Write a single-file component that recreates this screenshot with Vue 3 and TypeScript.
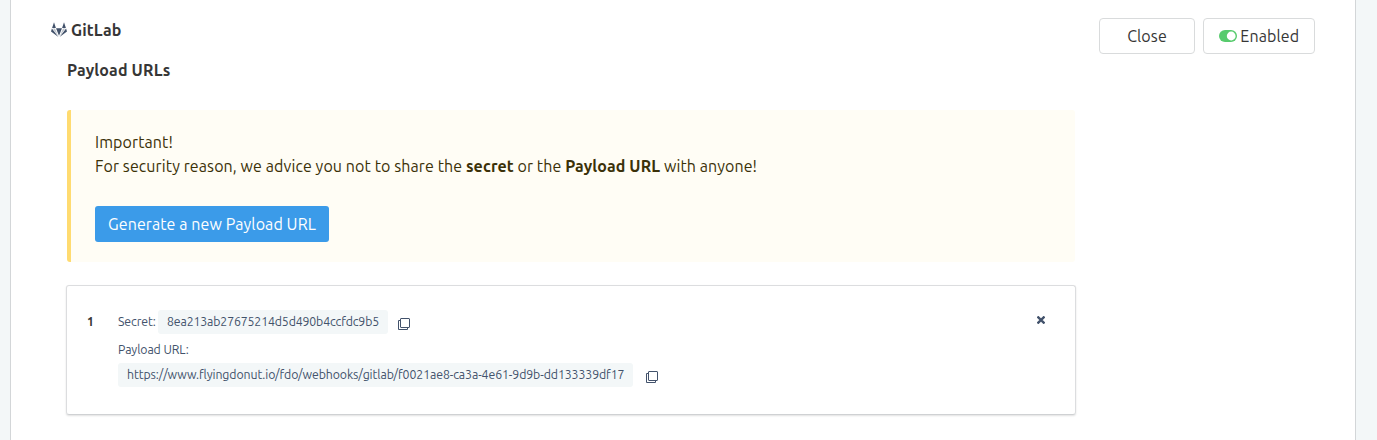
<script setup lang="ts">
import { ref } from 'vue'

interface Hook {
  secret: string
  url: string
}

const enabled = ref(true)
const hooks = ref<Hook[]>([
  {
    secret: '8ea213ab27675214d5d490b4ccfdc9b5',
    url: 'https://www.flyingdonut.io/fdo/webhooks/gitlab/f0021ae8-ca3a-4e61-9d9b-dd133339df17',
  },
])
</script>

<template>
  <div class="page">
    <main class="panel">
      <section class="content">
        <h2 class="title">
          <svg class="logo" width="16" height="16" viewBox="0 0 16 16">
            <path d="M3 .2 4.9 6H1.1zM13 .2 14.9 6H11.1zM5 6.2h6L8 13.8zM.9 6.5 0 9.6l7.4 5.3zM15.1 6.5 16 9.6l-7.4 5.3z" />
            <path class="cheek" d="M1.7 6.4h2.3l3 7.4zM14.3 6.4H12l-3 7.4z" />
          </svg>
          <span>GitLab</span>
        </h2>
        <h3 class="subtitle">Payload URLs</h3>

        <div class="notice">
          <p class="line">Important!</p>
          <p class="line">For security reason, we advice you not to share the <strong>secret</strong> or the <strong>Payload URL</strong> with anyone!</p>
          <button class="generate" type="button">Generate a new Payload URL</button>
        </div>

        <article v-for="(hook, i) in hooks" :key="hook.secret" class="card">
          <span class="index">{{ i + 1 }}</span>
          <div class="fields">
            <div class="row">
              <span class="label secret-label">Secret:</span>
              <code class="chip secret">{{ hook.secret }}</code>
              <svg class="copy" width="12" height="12" viewBox="0 0 12 12">
                <path d="M2.5 2.5H.5v9h9v-2" />
                <rect x="2.5" y=".5" width="9" height="9" rx=".5" />
              </svg>
            </div>
            <div class="label url-label">Payload URL:</div>
            <div class="row">
              <code class="chip url">{{ hook.url }}</code>
              <svg class="copy" width="12" height="12" viewBox="0 0 12 12">
                <path d="M2.5 2.5H.5v9h9v-2" />
                <rect x="2.5" y=".5" width="9" height="9" rx=".5" />
              </svg>
            </div>
          </div>
          <svg class="remove" width="8" height="8" viewBox="0 0 8 8">
            <path d="M.5 .5 7.5 7.5M7.5 .5 .5 7.5" />
          </svg>
        </article>
      </section>

      <div class="actions">
        <button class="btn close" type="button">Close</button>
        <button class="btn toggle" type="button" @click="enabled = !enabled">
          <svg width="18" height="12" viewBox="0 0 18 12">
            <rect width="18" height="12" rx="6" fill="#57cb6d" />
            <circle :cx="enabled ? 12.2 : 5.8" cy="6" r="4.4" fill="#fff" />
          </svg>
          <span>Enabled</span>
        </button>
      </div>
    </main>
  </div>
</template>

<style>
body {
  background: #f3f7f8;
}
</style>

<style scoped>
.page {
  height: 440px;
  padding: 0 21px 0 10px;
  overflow: hidden;
  background: #f3f7f8;
  font-family: Ubuntu, "Noto Sans", sans-serif;
  font-size: 16px;
  color: #363636;
  box-sizing: border-box;
}

.page * {
  box-sizing: border-box;
}

.panel {
  display: flex;
  justify-content: space-between;
  align-items: flex-start;
  height: 440px;
  padding: 18px 40px 0;
  background: #fff;
  border-left: 1px solid #d3d6d8;
  border-right: 1px solid #d3d6d8;
}

.content {
  width: 1025px;
}

.title {
  display: flex;
  align-items: center;
  gap: 4px;
  height: 24px;
  margin: 0;
  font-size: 16px;
  line-height: 24px;
  font-weight: 700;
  letter-spacing: 0.15px;
}

.logo {
  fill: #42526b;
}

.cheek {
  opacity: 0.35;
}

.subtitle {
  height: 24px;
  margin: 16px 0 0 16px;
  font-size: 16px;
  line-height: 24px;
  letter-spacing: 0.15px;
}

.notice {
  width: 1008px;
  height: 152px;
  margin: 28px 0 0 16px;
  padding: 20px 24px;
  background: #fffdf5;
  border-left: 4px solid #ffdb70;
  border-radius: 3px;
  color: #3b3108;
}

.line {
  margin: 0;
  line-height: 24px;
  letter-spacing: 0.095px;
  white-space: nowrap;
}

.generate {
  display: block;
  width: 234px;
  height: 36px;
  margin-top: 28px;
  padding: 0;
  border: 0;
  border-radius: 3px;
  background: #3b9be9;
  color: #fff;
  font: inherit;
  letter-spacing: 0.09px;
  white-space: nowrap;
}

.card {
  display: flex;
  width: 1010px;
  height: 130px;
  margin: 23px 0 0 15px;
  padding: 24px 30px 0 20px;
  border: 1px solid #dcdddf;
  border-bottom-color: #cfd1d3;
  border-radius: 3px;
  box-shadow: 0 1px 2px rgba(0, 0, 0, 0.12);
  color: #42526b;
  font-size: 12.3px;
  letter-spacing: -0.1px;
}

.index {
  width: 31px;
  line-height: 24px;
  font-weight: 700;
  color: #363636;
}

.fields {
  flex: 1;
}

.row {
  display: flex;
  align-items: center;
  height: 24px;
}

.label {
  height: 24px;
  line-height: 23px;
  white-space: nowrap;
}

.secret-label {
  width: 40px;
}

.url-label {
  margin: 4px 0 1px;
}

.chip {
  height: 24px;
  padding-left: 9px;
  border-radius: 3px;
  background: #f3f7f8;
  font-family: inherit;
  font-size: 12.3px;
  line-height: 23px;
  white-space: nowrap;
}

.secret {
  width: 230px;
  letter-spacing: -0.13px;
}

.url {
  width: 515px;
  letter-spacing: -0.09px;
}

.copy {
  margin: 4px 0 0 10px;
  fill: none;
  stroke: #42526b;
}

.url + .copy {
  margin-left: 13px;
}

.remove {
  margin-top: 6px;
  stroke: #42526b;
  stroke-width: 2.3;
}

.actions {
  display: flex;
  gap: 8px;
}

.btn {
  display: flex;
  align-items: center;
  justify-content: center;
  gap: 3.5px;
  height: 36px;
  padding: 0;
  border: 1px solid #d9dbdc;
  border-radius: 4px;
  background: #fff;
  color: #363636;
  font: inherit;
  letter-spacing: 0.1px;
}

.close {
  width: 96px;
}

.toggle {
  width: 112px;
}
</style>
